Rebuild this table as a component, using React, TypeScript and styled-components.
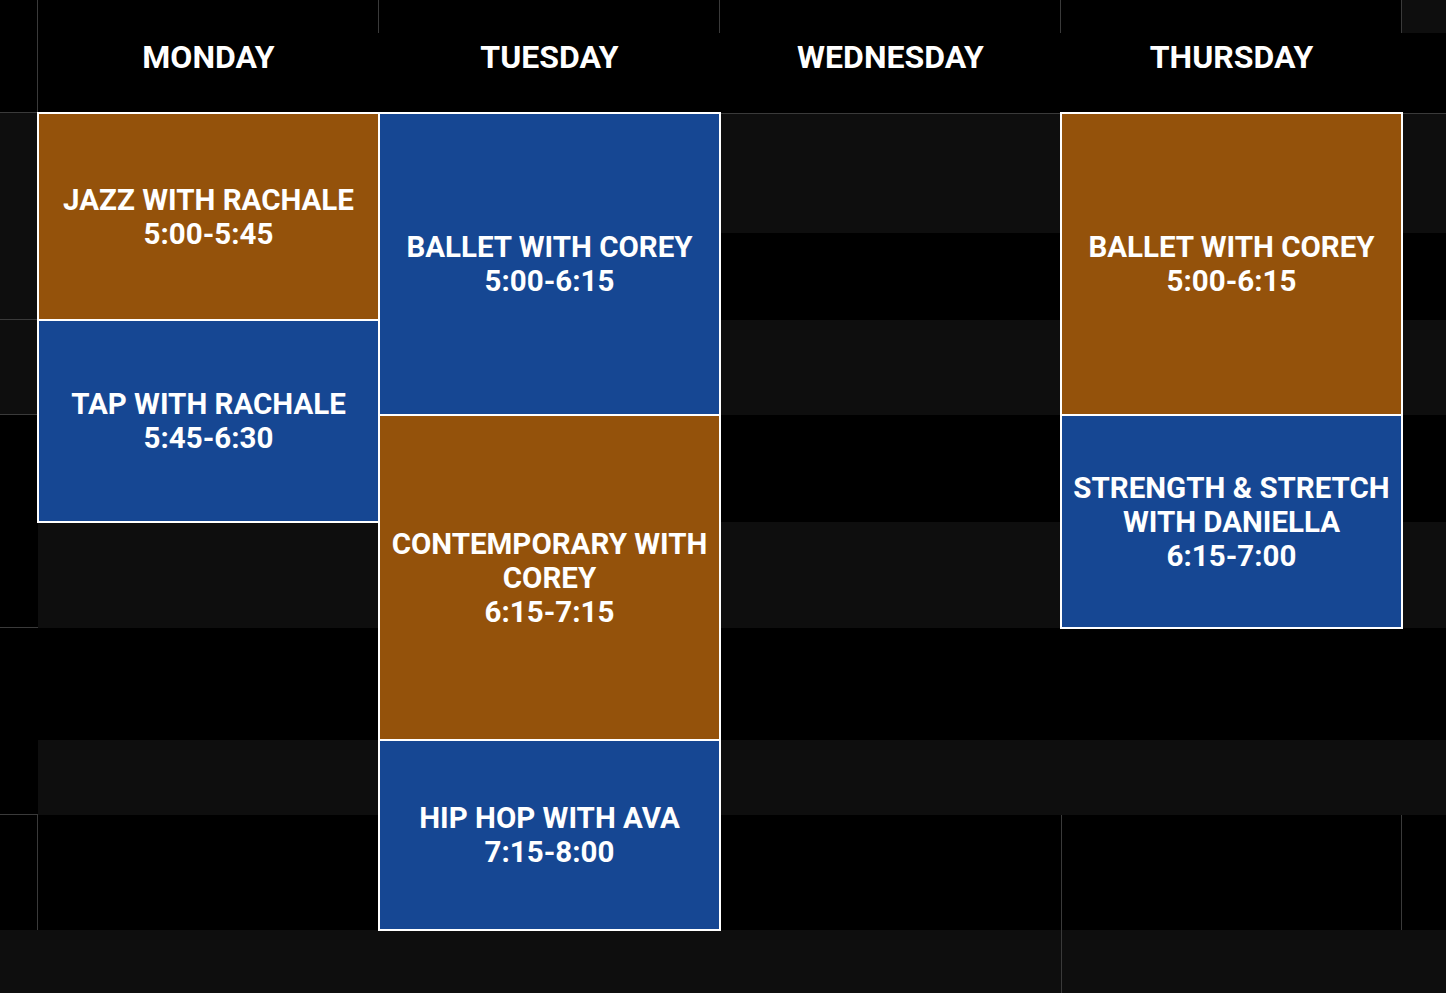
import * as React from 'react'
import styled, { createGlobalStyle } from 'styled-components'

const colors = {
  black: '#000000',
  stripe: '#0e0e0e',
  rule: '#3a3a3a',
  brown: '#94520b',
  blue: '#164793',
  white: '#ffffff',
}

type Tone = 'black' | 'stripe'
type Accent = 'brown' | 'blue'
type Edge = 'top' | 'right' | 'bottom' | 'left'

const GlobalStyle = createGlobalStyle`
  html, body {
    margin: 0;
    background: ${colors.black};
  }
  body {
    font-family: Roboto, 'Liberation Sans', sans-serif;
  }
`

const Schedule = styled.div`
  display: grid;
  grid-template-columns: 38px repeat(4, 341px) 44px;
  grid-template-rows: 33px 80px 120px 87px 95px 107px 106px 112px 75px 115px 63px;
  width: 1446px;
  height: 993px;
  overflow: hidden;
  background: ${colors.black};
`

const Band = styled.div<{ $row: string; $col: string; $tone: Tone; $edges?: Edge[] }>`
  grid-row: ${p => p.$row};
  grid-column: ${p => p.$col};
  background: ${p => colors[p.$tone]};
  ${p => (p.$edges || []).map(e => `border-${e}: 1px solid ${colors.rule};`).join('\n')}
`

const DayLabel = styled.div<{ $col: number }>`
  grid-row: 1 / 3;
  grid-column: ${p => p.$col};
  display: flex;
  align-items: center;
  justify-content: center;
  color: ${colors.white};
  font-size: 32px;
  font-weight: 700;
  text-transform: uppercase;
`

const ClassCard = styled.div<{ $row: string; $col: number; $accent: Accent }>`
  grid-row: ${p => p.$row};
  grid-column: ${p => p.$col};
  margin: -1px;
  border: 2px solid ${colors.white};
  background: ${p => colors[p.$accent]};
  display: flex;
  flex-direction: column;
  align-items: center;
  justify-content: center;
  padding: 0 6px;
  text-align: center;
  color: ${colors.white};
  font-size: 29.5px;
  font-weight: 700;
  line-height: 34px;
  text-transform: uppercase;
`

const days = ['Monday', 'Tuesday', 'Wednesday', 'Thursday']

// time gutter on the left, cut off by the crop
const gutter: { row: string; tone: Tone; edges: Edge[] }[] = [
  { row: '1 / 3', tone: 'black', edges: ['right', 'bottom'] },
  { row: '3 / 5', tone: 'stripe', edges: ['bottom'] },
  { row: '5 / 6', tone: 'stripe', edges: ['bottom'] },
  { row: '6 / 8', tone: 'black', edges: ['bottom'] },
  { row: '8 / 10', tone: 'black', edges: ['bottom'] },
  { row: '10 / 11', tone: 'black', edges: ['right'] },
  { row: '11 / 12', tone: 'stripe', edges: [] },
]

const stripes: Tone[] = ['stripe', 'black', 'stripe', 'black', 'stripe', 'black', 'stripe', 'black', 'stripe']

const classes: { row: string; col: number; accent: Accent; title: string; time: string }[] = [
  { row: '3 / 5', col: 2, accent: 'brown', title: 'Jazz with Rachale', time: '5:00-5:45' },
  { row: '5 / 7', col: 2, accent: 'blue', title: 'Tap with Rachale', time: '5:45-6:30' },
  { row: '3 / 6', col: 3, accent: 'blue', title: 'Ballet with Corey', time: '5:00-6:15' },
  { row: '6 / 9', col: 3, accent: 'brown', title: 'Contemporary with Corey', time: '6:15-7:15' },
  { row: '9 / 11', col: 3, accent: 'blue', title: 'Hip Hop with Ava', time: '7:15-8:00' },
  { row: '3 / 6', col: 5, accent: 'brown', title: 'Ballet with Corey', time: '5:00-6:15' },
  { row: '6 / 8', col: 5, accent: 'blue', title: 'Strength & Stretch with Daniella', time: '6:15-7:00' },
]

const App: React.FC = () => (
  <>
    <GlobalStyle />
    <Schedule>
      {gutter.map(g => (
        <Band key={g.row} $row={g.row} $col="1" $tone={g.tone} $edges={g.edges} />
      ))}

      {[2, 3, 4, 5].map(c => (
        <Band key={`tick-${c}`} $row="1" $col={String(c)} $tone="black" $edges={['right']} />
      ))}
      <Band $row="1" $col="6" $tone="stripe" />

      {stripes.map((tone, i) => (
        <Band
          key={`row-${i}`}
          $row={String(i + 3)}
          $col="2 / 7"
          $tone={tone}
          $edges={i === 0 ? ['top'] : []}
        />
      ))}
      <Band $row="10" $col="5" $tone="black" $edges={['left', 'right']} />
      <Band $row="11" $col="5" $tone="stripe" $edges={['left']} />

      {days.map((d, i) => (
        <DayLabel key={d} $col={i + 2}>
          {d}
        </DayLabel>
      ))}

      {classes.map(c => (
        <ClassCard key={`${c.col}-${c.row}`} $row={c.row} $col={c.col} $accent={c.accent}>
          <span>{c.title}</span>
          <span>{c.time}</span>
        </ClassCard>
      ))}
    </Schedule>
  </>
)

export default App
